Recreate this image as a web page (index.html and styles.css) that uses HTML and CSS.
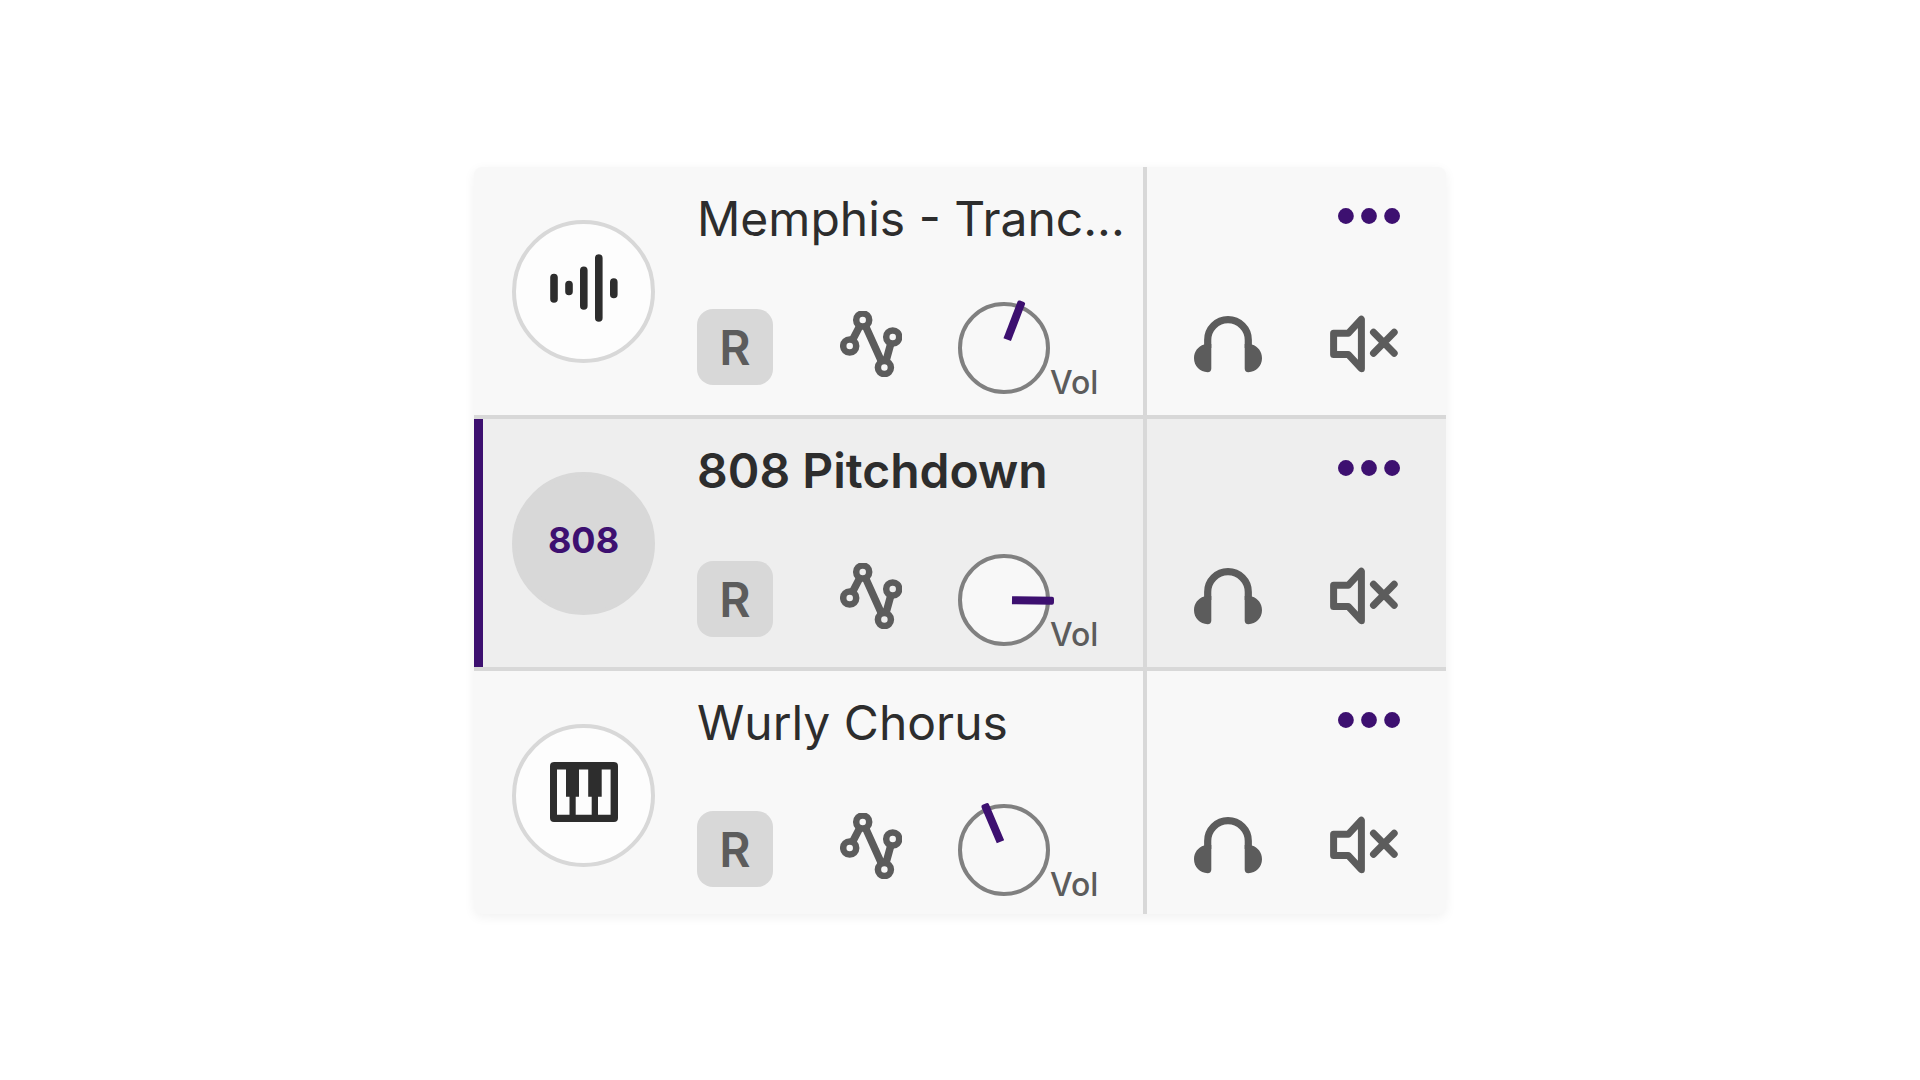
FILE: index.html
```
<!DOCTYPE html>
<html lang="en">
<head>
<meta charset="utf-8">
<meta name="viewport" content="width=device-width, initial-scale=1">
<title>Tracks</title>
<link rel="stylesheet" href="styles.css">
</head>
<body>
<svg class="sprite" aria-hidden="true">
  <symbol id="automation" viewBox="0 0 62 66">
    <g fill="none" stroke="currentColor">
      <path stroke-width="7.500" d="M12.500 29 19.800 15M25.500 15 41.500 50.500M46 50 50.800 32.500"/>
      <g stroke-width="6.500">
        <circle cx="22.700" cy="9" r="6.500"/><circle cx="9.700" cy="35" r="6.500"/>
        <circle cx="52.700" cy="26" r="6.500"/><circle cx="44.400" cy="56.600" r="6.500"/>
      </g>
    </g>
  </symbol>
  <symbol id="headphones" viewBox="0 0 68 57">
    <path d="M13.700 32V24A20.300 20.300 0 0 1 54.300 24V32" fill="none" stroke="currentColor" stroke-width="7.200"/>
    <path d="M17.300 28V52.500A3.700 3.700 0 0 1 13.600 56.200C6 56.200 0 50 0 42.300C0 35.500 4 30.500 10.100 28.600ZM50.700 28V52.500A3.700 3.700 0 0 0 54.400 56.200C62 56.200 68 50 68 42.300C68 35.500 64 30.500 57.900 28.600Z" fill="currentColor"/>
  </symbol>
  <symbol id="mute" viewBox="0 0 68 58">
    <path d="M3.600 18.300H18.200L31.400 4.200V53.700L18.200 39.400H3.600ZM43.500 17.200 64.200 38.200M64.200 17.200 43.500 38.200" fill="none" stroke="currentColor" stroke-width="7" stroke-linecap="round" stroke-linejoin="round"/>
  </symbol>
  <symbol id="dots" viewBox="0 0 62 16">
    <g fill="currentColor"><circle cx="7.900" cy="8" r="7.900"/><circle cx="31" cy="8" r="7.900"/><circle cx="54.100" cy="8" r="7.900"/></g>
  </symbol>
</svg>

<main class="tracks">
  <section class="track">
    <div class="track-main">
      <div class="avatar">
        <svg width="68" height="68" viewBox="0 0 68 68" aria-hidden="true">
          <path d="M4 23.500V45M19 30.500V37.500M33.800 16.200V52M48.800 4V64M63.800 28V40.500" stroke="currentColor" stroke-width="7.600" stroke-linecap="round"/>
        </svg>
      </div>
      <div class="track-body">
        <h2 class="track-name">Memphis - Tranc...</h2>
        <div class="controls">
          <button class="record" type="button">R</button>
          <button class="icon-button automation" type="button" aria-label="Automation"><svg width="62" height="66"><use href="#automation"/></svg></button>
          <label class="volume">
            <span class="dial">
              <svg width="92" height="92" viewBox="0 0 92 92" aria-hidden="true"><circle class="dial-ring" cx="46" cy="46" r="44"/><g transform="rotate(21 46 46)"><path class="dial-needle" d="M42 37V-2Q42-4 44-4H48Q50-4 50-2V37Z"/></g></svg>
              <input type="range" min="0" max="100" value="58">
            </span>
            <span class="volume-label">Vol</span>
          </label>
        </div>
      </div>
    </div>
    <div class="track-side">
      <button class="icon-button more" type="button" aria-label="More options"><svg width="62" height="16"><use href="#dots"/></svg></button>
      <div class="monitor">
        <button class="icon-button" type="button" aria-label="Solo"><svg width="68" height="57"><use href="#headphones"/></svg></button>
        <button class="icon-button" type="button" aria-label="Mute"><svg width="68" height="58"><use href="#mute"/></svg></button>
      </div>
    </div>
  </section>

  <section class="track track-selected">
    <div class="track-main">
      <div class="avatar">808</div>
      <div class="track-body">
        <h2 class="track-name">808 Pitchdown</h2>
        <div class="controls">
          <button class="record" type="button">R</button>
          <button class="icon-button automation" type="button" aria-label="Automation"><svg width="62" height="66"><use href="#automation"/></svg></button>
          <label class="volume">
            <span class="dial">
              <svg width="92" height="92" viewBox="0 0 92 92" aria-hidden="true"><circle class="dial-ring" cx="46" cy="46" r="44"/><g transform="rotate(91 46 46)"><path class="dial-needle" d="M42 38V-2Q42-4 44-4H48Q50-4 50-2V38Z"/></g></svg>
              <input type="range" min="0" max="100" value="83">
            </span>
            <span class="volume-label">Vol</span>
          </label>
        </div>
      </div>
    </div>
    <div class="track-side">
      <button class="icon-button more" type="button" aria-label="More options"><svg width="62" height="16"><use href="#dots"/></svg></button>
      <div class="monitor">
        <button class="icon-button" type="button" aria-label="Solo"><svg width="68" height="57"><use href="#headphones"/></svg></button>
        <button class="icon-button" type="button" aria-label="Mute"><svg width="68" height="58"><use href="#mute"/></svg></button>
      </div>
    </div>
  </section>

  <section class="track">
    <div class="track-main">
      <div class="avatar">
        <svg width="68" height="60" viewBox="0 0 68 60" aria-hidden="true">
          <path fill="currentColor" fill-rule="evenodd" d="M4 0H64Q68 0 68 4V56Q68 60 64 60H4Q0 60 0 56V4Q0 0 4 0ZM7 7.500V52.700H19.500V34.700H16V7.500ZM29 7.500V34.700H25.700V52.700H41.700V34.700H38.200V7.500ZM51.700 7.500V34.700H48V52.700H60.600V7.500Z"/>
        </svg>
      </div>
      <div class="track-body">
        <h2 class="track-name">Wurly Chorus</h2>
        <div class="controls">
          <button class="record" type="button">R</button>
          <button class="icon-button automation" type="button" aria-label="Automation"><svg width="62" height="66"><use href="#automation"/></svg></button>
          <label class="volume">
            <span class="dial">
              <svg width="92" height="92" viewBox="0 0 92 92" aria-hidden="true"><circle class="dial-ring" cx="46" cy="46" r="44"/><g transform="rotate(-23 46 46)"><path class="dial-needle" d="M42 37V-2Q42-4 44-4H48Q50-4 50-2V37Z"/></g></svg>
              <input type="range" min="0" max="100" value="42">
            </span>
            <span class="volume-label">Vol</span>
          </label>
        </div>
      </div>
    </div>
    <div class="track-side">
      <button class="icon-button more" type="button" aria-label="More options"><svg width="62" height="16"><use href="#dots"/></svg></button>
      <div class="monitor">
        <button class="icon-button" type="button" aria-label="Solo"><svg width="68" height="57"><use href="#headphones"/></svg></button>
        <button class="icon-button" type="button" aria-label="Mute"><svg width="68" height="58"><use href="#mute"/></svg></button>
      </div>
    </div>
  </section>
</main>
</body>
</html>
```
FILE: styles.css
```
:root {
  --accent: #3d1070;
  --ink: #2d2d2d;
  --muted: #5c5c5c;
  --line: #d8d8d8;
  --surface: #f8f8f8;
}

* {
  box-sizing: border-box;
}

body {
  margin: 0;
  min-height: 100vh;
  padding-top: 1px;
  display: flex;
  align-items: center;
  justify-content: center;
  background: #fff;
  color: var(--ink);
  font-family: Inter, "Liberation Sans", sans-serif;
}

.sprite {
  position: absolute;
  width: 0;
  height: 0;
}

.tracks {
  width: 100%;
  max-width: 972px;
  border-radius: 8px;
  overflow: hidden;
  background: var(--surface);
  box-shadow: 0 3px 12px rgba(0, 0, 0, 0.06);
}

.track {
  display: grid;
  grid-template-columns: minmax(0, 1fr) 303px;
  min-height: 252px;
  border-bottom: 4px solid var(--line);
}

.track:last-child {
  min-height: 243px;
  border-bottom: 0;
}

.track-selected {
  background: #eee;
  box-shadow: inset 9px 0 var(--accent);
}

.track-main {
  display: flex;
  gap: 42px;
  padding-left: 38px;
}

.avatar {
  flex: none;
  display: flex;
  align-items: center;
  justify-content: center;
  width: 143px;
  height: 143px;
  margin-top: 53px;
  padding-bottom: 8px;
  border: 4px solid var(--line);
  border-radius: 50%;
  background: #fdfdfd;
  font-size: 36px;
  font-weight: 700;
}

.track-selected .avatar {
  background: var(--line);
  color: var(--accent);
}

.track-body {
  flex: 1;
  min-width: 0;
  display: flex;
  flex-direction: column;
  justify-content: space-between;
  padding: 22px 0 21px;
}

.track:last-child .track-body {
  padding-bottom: 18px;
}

.track-name {
  margin: 0;
  overflow: hidden;
  font-size: 48px;
  font-weight: 400;
  line-height: 60px;
  white-space: nowrap;
}

.track-selected .track-name {
  font-weight: 600;
}

.controls {
  display: flex;
  align-items: center;
  gap: 56px;
}

button {
  padding: 0;
  border: 0;
  background: none;
  color: var(--muted);
  font: inherit;
  cursor: pointer;
}

.record {
  width: 76px;
  height: 76px;
  margin-bottom: 2px;
  padding-top: 2px;
  border-radius: 16px;
  background: var(--line);
  font-size: 48px;
  font-weight: 600;
  line-height: 74px;
}

.icon-button svg {
  display: block;
}

.automation {
  padding: 0 0 8px 11px;
}

.volume {
  display: flex;
  align-items: flex-end;
  color: var(--muted);
}

.dial {
  display: grid;
}

.dial > * {
  grid-area: 1 / 1;
}

.dial svg {
  overflow: visible;
}

.dial input {
  width: 92px;
  height: 92px;
  margin: 0;
  opacity: 0;
}

.dial-ring {
  fill: var(--surface);
  stroke: #808080;
  stroke-width: 4px;
}

.dial-needle {
  fill: var(--accent);
}

.volume-label {
  font-size: 32px;
  font-weight: 500;
  line-height: 22px;
}

.track-side {
  display: flex;
  flex-direction: column;
  justify-content: space-between;
  padding: 41px 48px 42px 47px;
  border-left: 4px solid var(--line);
}

.track:last-child .track-side {
  padding-bottom: 40px;
}

.more {
  align-self: flex-end;
  margin-right: -2px;
  color: var(--accent);
}

.monitor {
  display: flex;
  justify-content: space-between;
}
```
